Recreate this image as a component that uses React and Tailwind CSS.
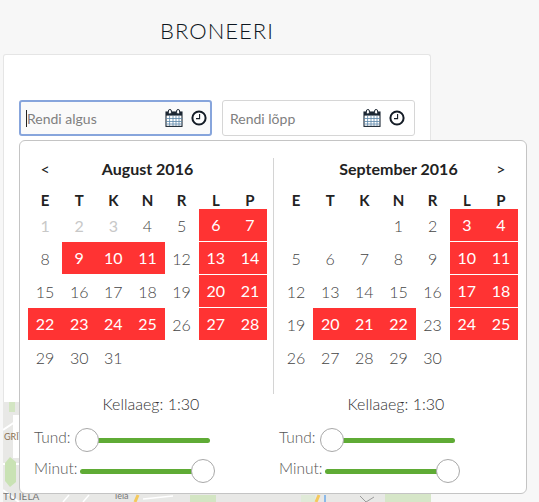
import React from "react";

const font = { fontFamily: "Lato, sans-serif" };

const august = [
  [
    { d: 1, off: true },
    { d: 2, off: true },
    { d: 3, off: true },
    { d: 4 },
    { d: 5 },
    { d: 6, red: true },
    { d: 7, red: true },
  ],
  [
    { d: 8 },
    { d: 9, red: true },
    { d: 10, red: true },
    { d: 11, red: true },
    { d: 12 },
    { d: 13, red: true },
    { d: 14, red: true },
  ],
  [
    { d: 15 },
    { d: 16 },
    { d: 17 },
    { d: 18 },
    { d: 19 },
    { d: 20, red: true },
    { d: 21, red: true },
  ],
  [
    { d: 22, red: true },
    { d: 23, red: true },
    { d: 24, red: true },
    { d: 25, red: true },
    { d: 26 },
    { d: 27, red: true },
    { d: 28, red: true },
  ],
  [{ d: 29 }, { d: 30 }, { d: 31 }, {}, {}, {}, {}],
];

const september = [
  [{}, {}, {}, { d: 1 }, { d: 2 }, { d: 3, red: true }, { d: 4, red: true }],
  [
    { d: 5 },
    { d: 6 },
    { d: 7 },
    { d: 8 },
    { d: 9 },
    { d: 10, red: true },
    { d: 11, red: true },
  ],
  [
    { d: 12 },
    { d: 13 },
    { d: 14 },
    { d: 15 },
    { d: 16 },
    { d: 17, red: true },
    { d: 18, red: true },
  ],
  [
    { d: 19 },
    { d: 20, red: true },
    { d: 21, red: true },
    { d: 22, red: true },
    { d: 23 },
    { d: 24, red: true },
    { d: 25, red: true },
  ],
  [{ d: 26 }, { d: 27 }, { d: 28 }, { d: 29 }, { d: 30 }, {}, {}],
];

const CalendarIcon = () => (
  <svg width="18" height="18" viewBox="0 0 18 18" className="shrink-0">
    <rect x="1" y="3" width="16" height="14.4" fill="#fff" stroke="#1c2733" strokeWidth="1.1" />
    <rect x="1" y="3" width="16" height="3.6" fill="#1c2733" />
    <rect x="3.4" y="0.5" width="3" height="4.6" rx="1.5" fill="#fff" stroke="#1c2733" />
    <rect x="11.6" y="0.5" width="3" height="4.6" rx="1.5" fill="#fff" stroke="#1c2733" />
    <path
      d="M1 9.5h16M1 12.5h16M1 15h16M4.6 6.5v10.5M8 6.5v10.5M11 6.5v10.5M14 6.5v10.5"
      stroke="#5b86a8"
      strokeWidth="0.8"
      fill="none"
    />
  </svg>
);

const ClockIcon = () => (
  <svg width="16" height="16" viewBox="0 0 16 16" className="shrink-0">
    <circle cx="8" cy="8" r="6.6" fill="#fff" stroke="#141c26" strokeWidth="2" />
    <path d="M8.6 4v4.6H5" stroke="#141c26" strokeWidth="1.1" fill="none" />
  </svg>
);

const DateInput = ({ label, focused }) => (
  <div
    className={
      focused
        ? "w-[193px] h-[36px] flex items-center rounded-[3px] border-2 border-[#87a5dc] bg-[#fafafa] pl-[5px] pr-[3px]"
        : "w-[193px] h-[36px] flex items-center rounded-[3px] border border-[#d6d6d6] bg-white pl-[7px] pr-[9px]"
    }
  >
    {focused && <span className="w-px h-[17px] bg-[#222] shrink-0" />}
    <span className="flex-1 text-[14px] text-[#808080]">{label}</span>
    <div className="flex items-center gap-[8px]">
      <CalendarIcon />
      <ClockIcon />
    </div>
  </div>
);

const Month = ({ title, rows, prev, next }) => (
  <div className="w-[239px] shrink-0">
    <div className="grid grid-cols-7 h-[48px] pt-[8px] items-center text-center text-[#222]">
      <div className="text-[16px]">{prev && "<"}</div>
      <div className="col-span-5 text-[16px] font-bold">{title}</div>
      <div className="text-[16px]">{next && ">"}</div>
    </div>
    <div className="grid grid-cols-7 h-[20px] items-center text-center text-[15px] font-bold text-[#222]">
      {["E", "T", "K", "N", "R", "L", "P"].map((day) => (
        <div key={day}>{day}</div>
      ))}
    </div>
    <div>
      {rows.map((row, i) => (
        <div key={i} className="grid grid-cols-7 h-[33px]">
          {row.map((cell, j) => (
            <div
              key={j}
              className={
                cell.red
                  ? "flex items-center justify-center bg-[#ff3333] text-white border-b border-white text-[16px]"
                  : cell.off
                    ? "flex items-center justify-center text-[#c8c8c8] text-[16px]"
                    : "flex items-center justify-center text-[#444] text-[16px] font-light"
              }
            >
              {cell.d}
            </div>
          ))}
        </div>
      ))}
    </div>
  </div>
);

const Slider = ({ label, labelClass, thumbRight }) => (
  <div className="flex items-center h-[31px]">
    <span className={labelClass}>{label}</span>
    <div className="relative w-[123px] h-[5px] rounded-full bg-[#5fab35]">
      <div
        className={
          thumbRight
            ? "absolute right-[-12px] top-[-10px] w-[24px] h-[24px] rounded-full bg-white border border-[#a8a8a8]"
            : "absolute left-[-12px] top-[-10px] w-[24px] h-[24px] rounded-full bg-white border border-[#a8a8a8]"
        }
      />
    </div>
  </div>
);

const TimePicker = () => (
  <div className="w-[245px] shrink-0">
    <div className="w-[234px] text-center text-[16px] font-light text-[#333] h-[24px] leading-[24px]">
      Kellaaeg: 1:30
    </div>
    <div className="mt-[9px]">
      <Slider label="Tund:" labelClass="w-[53px] pb-[5px] text-[15.5px] font-light text-[#555]" />
      <Slider label="Minut:" labelClass="w-[46px] pb-[5px] text-[15.5px] font-light text-[#555]" thumbRight />
    </div>
  </div>
);

const MapStrip = () => (
  <svg width="428" height="100" viewBox="0 0 428 100" className="block">
    <rect width="428" height="100" fill="#e8e8e6" />
    <path d="M0 28l15-10M0 62h16M0 88l16 12" stroke="#fff" strokeWidth="2" fill="none" />
    <rect x="6" y="0" width="6" height="10" fill="#d3e5c3" />
    <path d="M7 55l6 5v20l-6 5l-5-6v-18z" fill="#c9e2b4" />
    <rect x="10" y="13" width="6" height="43" fill="#fff" />
    <text x="1" y="38" fontSize="9" fill="#8b7355" fontFamily="Lato, sans-serif">
      GRĪ
    </text>
    <text x="0" y="98" fontSize="10" fill="#777" fontFamily="Lato, sans-serif">
      TU IELA
    </text>
    <text x="112" y="97" fontSize="9" fill="#777" fontFamily="Lato, sans-serif">
      iela
    </text>
    <path d="M132 100l3-7" stroke="#f4c95d" strokeWidth="3" fill="none" />
    <path d="M140 97l30-3M80 100l6-7M60 100l6-7" stroke="#fff" strokeWidth="1.5" fill="none" />
    <rect x="187" y="93" width="26" height="7" fill="#d3e5c3" />
    <rect x="298" y="93" width="14" height="7" fill="#e0ead8" />
    <path d="M313 100l3-7" stroke="#f4c95d" strokeWidth="3" fill="none" />
    <path d="M322 93v7" stroke="#8cb9e8" strokeWidth="2" fill="none" />
    <path d="M357 94l6 6l8-5" stroke="#9a9a9a" strokeWidth="1" fill="none" />
    <rect x="382" y="92" width="46" height="8" fill="#d6e6c8" />
  </svg>
);

const App = () => {
  return (
    <div className="relative w-[539px] h-[502px] overflow-hidden bg-[#f7f7f7]" style={font}>
      <h1 className="ml-[3px] pt-[18px] w-[428px] text-center text-[22px] leading-[26px] tracking-[1px] text-[#0e1620] font-light">
        BRONEERI
      </h1>
      <div className="ml-[3px] mt-[10px] w-[428px] h-[348px] rounded-t-[3px] border border-[#e5e5e5] border-b-0 bg-white pl-[15px] pt-[45px]">
        <div className="flex gap-[10px]">
          <DateInput label="Rendi algus" focused />
          <DateInput label="Rendi lõpp" />
        </div>
      </div>
      <div className="ml-[3px]">
        <MapStrip />
      </div>

      <div className="absolute left-[19px] top-[140px] w-[508px] h-[354px] rounded-[6px] border border-[#c4c4c4] bg-white pl-[8px]">
        <div className="flex h-[233px]">
          <Month title="August 2016" rows={august} prev />
          <div className="ml-[6px] mr-[5px] mt-[17px] w-px h-[236px] shrink-0 bg-[#d4d4d4]" />
          <Month title="September 2016" rows={september} next />
        </div>
        <div className="flex mt-[18px] pl-[6px]">
          <TimePicker />
          <TimePicker />
        </div>
      </div>
    </div>
  );
};

export default App;
